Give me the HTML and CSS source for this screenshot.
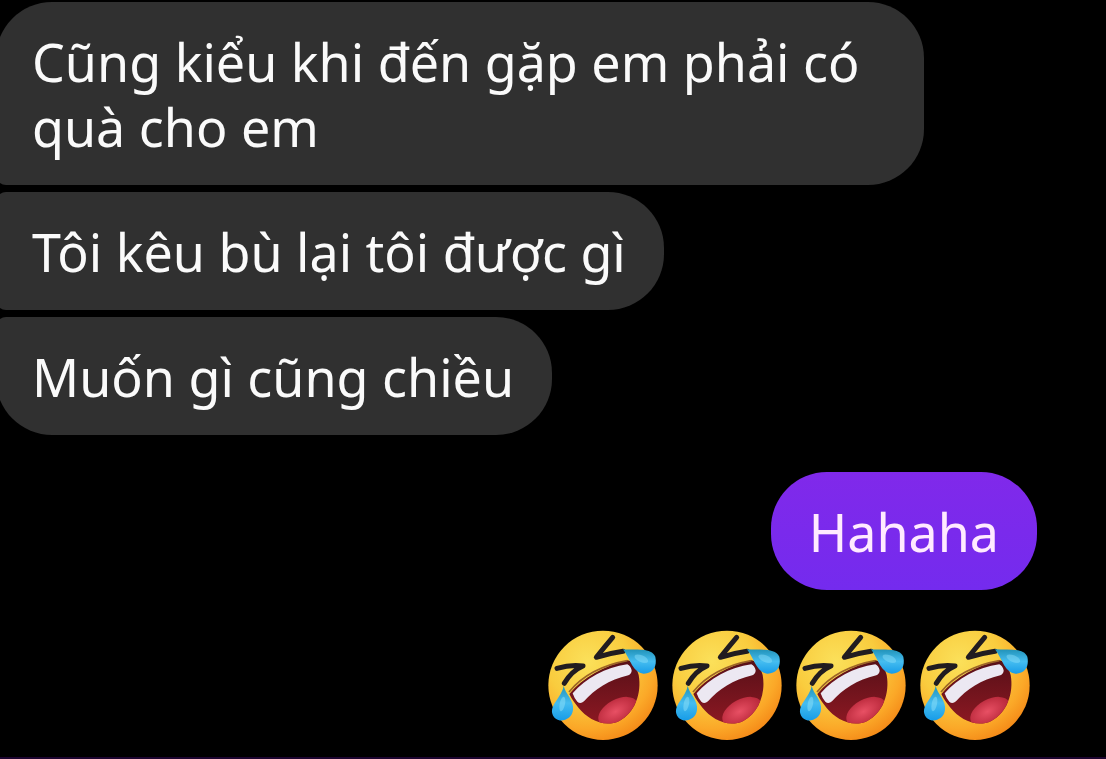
FILE: index.html
```
<!DOCTYPE html>
<html lang="vi">
<head>
<meta charset="utf-8">
<meta name="viewport" content="width=device-width, initial-scale=1">
<title>Chat</title>
<link rel="stylesheet" href="styles.css">
</head>
<body class="chat">
<svg class="defs" aria-hidden="true">
  <defs>
    <radialGradient id="skin" cx="0.36" cy="0.28" r="0.82">
      <stop offset="0" stop-color="#fbe05a"/>
      <stop offset="0.45" stop-color="#f9cc3e"/>
      <stop offset="0.75" stop-color="#fba828"/>
      <stop offset="1" stop-color="#f27f12"/>
    </radialGradient>
    <linearGradient id="tear" x1="0" y1="0" x2="0" y2="1">
      <stop offset="0" stop-color="#2292b8"/>
      <stop offset="0.5" stop-color="#45bdf0"/>
      <stop offset="1" stop-color="#179ce8"/>
    </linearGradient>
    <linearGradient id="mouth" x1="0" y1="0" x2="0" y2="1">
      <stop offset="0" stop-color="#571018"/>
      <stop offset="1" stop-color="#8c1822"/>
    </linearGradient>
    <radialGradient id="tongue" cx="0.45" cy="0.45" r="0.6">
      <stop offset="0" stop-color="#e85064"/>
      <stop offset="1" stop-color="#b42436"/>
    </radialGradient>
    <clipPath id="mouth-shape">
      <path d="M88 222 C128 172 194 138 262 121 C278 122 290 143 296 165 C306 220 284 279 238 303 C192 325 143 297 116 264 C106 250 96 240 88 222 Z"/>
    </clipPath>
    <symbol id="rofl" viewBox="3 9 372 372">
      <circle cx="189" cy="196" r="164" fill="url(#skin)"/>
      <path d="M88 222 C128 172 194 138 262 121 C278 122 290 143 296 165 C306 220 284 279 238 303 C192 325 143 297 116 264 C106 250 96 240 88 222 Z" fill="url(#mouth)"/>
      <g clip-path="url(#mouth-shape)">
        <ellipse cx="234" cy="275" rx="64" ry="37" transform="rotate(-28 234 275)" fill="url(#tongue)"/>
      </g>
      <path d="M98 220 C138 174 196 143 262 133 Q272 138 275 151 Q275 162 265 166 C207 180 164 208 132 244 Q121 253 112 245 Q103 236 98 220 Z" fill="#ece8f2"/>
      <path d="M87 216 C126 168 190 135 262 122" fill="none" stroke="#9c6428" stroke-width="5"/>
      <g fill="none" stroke="#211c20" stroke-width="15" stroke-linecap="round" stroke-linejoin="round">
        <path d="M218 52 Q194 80 169 112 Q208 100 249 94"/>
        <path d="M51 145 Q92 133 129 138 Q94 153 73 190"/>
      </g>
      <path d="M249 88 C287 91 334 82 346 110 C352 139 340 160 311 161 C278 158 272 119 249 88 Z" fill="url(#tear)"/>
      <path d="M71 197 C76 222 103 240 99 270 C95 304 47 314 37 281 C30 253 65 232 71 197 Z" fill="url(#tear)"/>
      <ellipse cx="304" cy="116" rx="22" ry="10" transform="rotate(24 304 116)" fill="#86dcf8" opacity="0.5"/>
      <ellipse cx="67" cy="252" rx="8" ry="22" transform="rotate(12 67 252)" fill="#8edff8" opacity="0.5"/>
    </symbol>
  </defs>
</svg>
<main class="thread">
  <section class="group incoming">
    <p class="bubble">Cũng kiểu khi đến gặp em phải có quà cho em</p>
    <p class="bubble">Tôi kêu bù lại tôi được gì</p>
    <p class="bubble">Muốn gì cũng chiều</p>
  </section>
  <section class="group outgoing">
    <p class="bubble">Hahaha</p>
    <div class="emojis" role="img" aria-label="🤣🤣🤣🤣">
      <svg class="emoji"><use href="#rofl"/></svg>
      <svg class="emoji"><use href="#rofl"/></svg>
      <svg class="emoji"><use href="#rofl"/></svg>
      <svg class="emoji"><use href="#rofl"/></svg>
    </div>
  </section>
</main>
<footer class="edge"></footer>
</body>
</html>
```

FILE: styles.css
```
* {
  box-sizing: border-box;
}

.chat {
  margin: 0;
  min-height: 100vh;
  display: flex;
  flex-direction: column;
  overflow-x: hidden;
  background: #000;
  color: #fafafa;
  font-family: "Noto Sans", sans-serif;
  font-size: 52px;
  line-height: 65px;
}

.defs {
  position: absolute;
  width: 0;
  height: 0;
}

.thread {
  flex: 1;
  display: flex;
  flex-direction: column;
  gap: 37px;
  padding: 2px 69px 0 0;
}

.group {
  display: flex;
  flex-direction: column;
}

.incoming {
  align-items: flex-start;
  gap: 7px;
  margin-left: -4px;
}

.outgoing {
  align-items: flex-end;
  gap: 33px;
}

.bubble {
  margin: 0;
  max-width: 928px;
  padding: 27px 38px 26px;
  border-radius: 56px;
  background: #303030;
}

.incoming .bubble {
  padding-left: 36px;
}

.incoming .bubble:not(:last-child) {
  border-bottom-left-radius: 10px;
}

.incoming .bubble:not(:first-child) {
  border-top-left-radius: 10px;
}

.outgoing .bubble {
  background: linear-gradient(#8029ea, #742bee);
  color: #ffeaff;
}

.emojis {
  display: flex;
}

.emoji {
  display: block;
  width: 124px;
  height: 124px;
}

.edge {
  height: 2px;
  background: #1c0530;
}
```
